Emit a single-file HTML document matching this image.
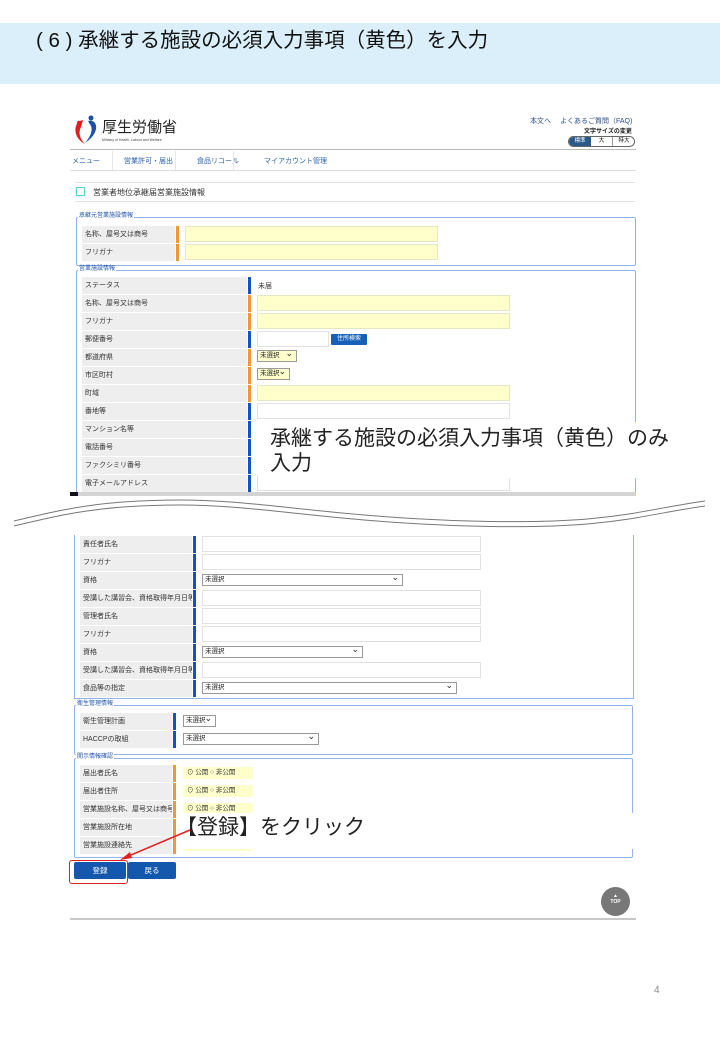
<!DOCTYPE html>
<html><head><meta charset="utf-8"><style>
*{margin:0;padding:0;box-sizing:border-box}
body{width:720px;height:1040px;position:relative;background:#fff;font-family:"Liberation Sans","Noto Sans CJK JP",sans-serif;overflow:hidden}
.a{position:absolute}
.lab{position:absolute;background:#eee;font-size:7px;color:#333;line-height:17px;padding-left:3px;height:17px;white-space:nowrap;overflow:hidden}
.bar{position:absolute;width:3px;height:17px}
.o{background:#f0973a}.b{background:#1452c4}
.in{position:absolute;height:16px;border:1px solid #e2e2e2;background:#fff}
.y{background:#ffffcc;border-color:#e6e6c0}
.fs{position:absolute;border:1px solid #8fb3ea;border-radius:2px}
.lg{position:absolute;font-size:6px;color:#2255aa;background:#fff;padding:0 1px;line-height:7px}
.sel{position:absolute;height:12px;border:1px solid #999;background:#fff;font-size:6.5px;line-height:10px;padding-left:2px;color:#222}
.sel:after{content:"⌄";position:absolute;right:3px;top:-3px;font-size:9px}
.rad{position:absolute;background:#ffffcc;height:12px;font-size:6.5px;line-height:12px;color:#333;padding-left:4px}
.nav{position:absolute;top:156px;font-size:7px;color:#2a62b0}
</style></head><body>
<div class="a" style="left:0;top:23px;width:720px;height:61px;background:#dbeffa"></div>
<div class="a" style="left:36px;top:28px;font-size:20.5px;color:#111;line-height:26px">( 6 ) 承継する施設の必須入力事項（黄色）を入力</div>

<!-- header -->
<svg class="a" style="left:73px;top:115px" width="28" height="30" viewBox="0 0 28 30"><path d="M10 5C4 6 1 12 3 19C5 25 10 28 12 29C7 24 5 18 8 12Z" fill="#e02020"/><circle cx="6" cy="8" r="2.2" fill="#e02020"/><path d="M15 6C22 4 25 11 22 17C20 22 16 25 12 28C17 22 20 16 18 11Z" fill="#1c4fa8"/><circle cx="18" cy="3" r="2.5" fill="#1c4fa8"/></svg>
<div class="a" style="left:102px;top:118px;font-size:15px;color:#222;font-family:'Noto Sans CJK JP',sans-serif;line-height:18px">厚生労働省</div>
<div class="a" style="left:102px;top:138px;font-size:3.5px;color:#444">Ministry of Health, Labour and Welfare</div>
<div class="a" style="left:530px;top:116px;font-size:7px;color:#2a4f8a">本文へ　 よくあるご質問（FAQ)</div>
<div class="a" style="left:584px;top:126px;font-size:6px;color:#222;font-weight:bold">文字サイズの変更</div>
<div class="a" style="left:568px;top:136px;width:67px;height:11px;border:1px solid #666;border-radius:6px;overflow:hidden;font-size:5.5px;line-height:9px;text-align:center"><span class="a" style="left:0;top:0;height:9px;width:22px;background:#2a5a8a;color:#fff">標準</span><span class="a" style="left:22px;top:0;height:9px;width:22px;border-right:1px solid #999">大</span><span class="a" style="left:44px;top:0;height:9px;width:22px">特大</span></div>
<div class="a" style="left:70px;top:149px;width:566px;height:1px;background:#bbb"></div>
<div class="nav" style="left:72px">メニュー</div>
<div class="nav" style="left:124px">営業許可・届出</div>
<div class="nav" style="left:197px">食品リコール</div>
<div class="nav" style="left:264px">マイアカウント管理</div>
<div class="a" style="left:112px;top:151px;width:1px;height:19px;background:#e6e6e6"></div>
<div class="a" style="left:175px;top:151px;width:1px;height:19px;background:#e6e6e6"></div>
<div class="a" style="left:233px;top:151px;width:1px;height:19px;background:#e6e6e6"></div>
<div class="a" style="left:70px;top:170px;width:566px;height:1px;background:#ddd"></div>
<div class="a" style="left:75px;top:182px;width:560px;height:1px;background:#e4e4e4"></div>
<div class="a" style="left:75px;top:201px;width:560px;height:1px;background:#e4e4e4"></div>
<div class="a" style="left:76px;top:187px;width:9px;height:9px;border:1px solid #6cc8d0"></div>
<div class="a" style="left:93px;top:187px;font-size:8px;color:#333">営業者地位承継届営業施設情報</div>

<!-- section 1 -->
<div class="fs" style="left:76px;top:217px;width:560px;height:49px"></div>
<div class="lg" style="left:78px;top:213px">承継元営業施設情報</div>
<div class="lab" style="left:82px;top:226px;width:93px">名称、屋号又は商号</div><div class="bar o" style="left:176px;top:226px"></div><div class="in y" style="left:185px;top:226px;width:253px"></div>
<div class="lab" style="left:82px;top:244px;width:93px">フリガナ</div><div class="bar o" style="left:176px;top:244px"></div><div class="in y" style="left:185px;top:244px;width:253px"></div>

<!-- section 2 -->
<div class="fs" style="left:76px;top:270px;width:560px;height:226px;border-bottom:none"></div>
<div class="lg" style="left:78px;top:266px">営業施設情報</div>
<div class="lab" style="left:82px;top:277px;width:165px">ステータス</div><div class="bar b" style="left:248px;top:277px"></div><div class="a" style="left:258px;top:281px;font-size:7px;color:#333">未届</div>
<div class="lab" style="left:82px;top:295px;width:165px">名称、屋号又は商号</div><div class="bar o" style="left:248px;top:295px"></div><div class="in y" style="left:257px;top:295px;width:253px"></div>
<div class="lab" style="left:82px;top:313px;width:165px">フリガナ</div><div class="bar o" style="left:248px;top:313px"></div><div class="in y" style="left:257px;top:313px;width:253px"></div>
<div class="lab" style="left:82px;top:331px;width:165px">郵便番号</div><div class="bar b" style="left:248px;top:331px"></div><div class="in" style="left:257px;top:331px;width:72px"></div><div class="a" style="left:331px;top:334px;width:36px;height:11px;background:#1660b8;color:#fff;font-size:6px;text-align:center;line-height:11px;border-radius:1px">住所検索</div>
<div class="lab" style="left:82px;top:349px;width:165px">都道府県</div><div class="bar o" style="left:248px;top:349px"></div><div class="sel" style="left:257px;top:350px;width:40px;background:#ffffcc">未選択</div>
<div class="lab" style="left:82px;top:367px;width:165px">市区町村</div><div class="bar o" style="left:248px;top:367px"></div><div class="sel" style="left:257px;top:368px;width:33px;background:#ffffcc">未選択</div>
<div class="lab" style="left:82px;top:385px;width:165px">町域</div><div class="bar o" style="left:248px;top:385px"></div><div class="in y" style="left:257px;top:385px;width:253px"></div>
<div class="lab" style="left:82px;top:403px;width:165px">番地等</div><div class="bar b" style="left:248px;top:403px"></div><div class="in" style="left:257px;top:403px;width:253px"></div>
<div class="lab" style="left:82px;top:421px;width:165px">マンション名等</div><div class="bar b" style="left:248px;top:421px"></div>
<div class="lab" style="left:82px;top:439px;width:165px">電話番号</div><div class="bar b" style="left:248px;top:439px"></div>
<div class="lab" style="left:82px;top:457px;width:165px">ファクシミリ番号</div><div class="bar b" style="left:248px;top:457px"></div>
<div class="lab" style="left:82px;top:475px;width:165px">電子メールアドレス</div><div class="bar b" style="left:248px;top:475px"></div><div class="in" style="left:257px;top:475px;width:253px"></div>
<div class="a" style="left:258px;top:422px;width:432px;height:56px;background:#fff"></div>
<div class="a" style="left:270px;top:426px;font-size:21px;line-height:25px;color:#222;white-space:nowrap">承継する施設の必須入力事項（黄色）のみ<br>入力</div>
<div class="a" style="left:70px;top:492px;width:566px;height:4px;background:#d4d4d4"></div>
<div class="a" style="left:70px;top:492px;width:8px;height:4px;background:#111"></div>

<!-- wave -->
<svg class="a" style="left:0;top:495px" width="720" height="40"><g fill="none" stroke="#777" stroke-width="1"><path d="M14 26C60 15 100 5 180 5S330 22 470 26S640 15 705 6"/><path d="M14 31C60 20 100 10 180 10S330 27 470 31S640 20 705 11"/></g></svg>

<!-- part 2 -->
<div class="a" style="left:74px;top:535px;width:1px;height:164px;background:#8fb3ea"></div>
<div class="a" style="left:633px;top:535px;width:1px;height:164px;background:#8fb3ea"></div>
<div class="a" style="left:74px;top:698px;width:560px;height:1px;background:#8fb3ea"></div>
<div class="lab" style="left:80px;top:536px;width:112px">責任者氏名</div><div class="bar b" style="left:193px;top:536px"></div><div class="in" style="left:202px;top:536px;width:279px"></div>
<div class="lab" style="left:80px;top:554px;width:112px">フリガナ</div><div class="bar b" style="left:193px;top:554px"></div><div class="in" style="left:202px;top:554px;width:279px"></div>
<div class="lab" style="left:80px;top:572px;width:112px">資格</div><div class="bar b" style="left:193px;top:572px"></div><div class="sel" style="left:202px;top:574px;width:201px">未選択</div>
<div class="lab" style="left:80px;top:590px;width:112px">受講した講習会、資格取得年月日等</div><div class="bar b" style="left:193px;top:590px"></div><div class="in" style="left:202px;top:590px;width:279px"></div>
<div class="lab" style="left:80px;top:608px;width:112px">管理者氏名</div><div class="bar b" style="left:193px;top:608px"></div><div class="in" style="left:202px;top:608px;width:279px"></div>
<div class="lab" style="left:80px;top:626px;width:112px">フリガナ</div><div class="bar b" style="left:193px;top:626px"></div><div class="in" style="left:202px;top:626px;width:279px"></div>
<div class="lab" style="left:80px;top:644px;width:112px">資格</div><div class="bar b" style="left:193px;top:644px"></div><div class="sel" style="left:202px;top:646px;width:161px">未選択</div>
<div class="lab" style="left:80px;top:662px;width:112px">受講した講習会、資格取得年月日等</div><div class="bar b" style="left:193px;top:662px"></div><div class="in" style="left:202px;top:662px;width:279px"></div>
<div class="lab" style="left:80px;top:680px;width:112px">食品等の指定</div><div class="bar b" style="left:193px;top:680px"></div><div class="sel" style="left:202px;top:682px;width:255px">未選択</div>

<div class="fs" style="left:74px;top:705px;width:559px;height:50px"></div>
<div class="lg" style="left:76px;top:701px">衛生管理情報</div>
<div class="lab" style="left:80px;top:713px;width:92px">衛生管理計画</div><div class="bar b" style="left:173px;top:713px"></div><div class="sel" style="left:183px;top:715px;width:33px">未選択</div>
<div class="lab" style="left:80px;top:731px;width:92px">HACCPの取組</div><div class="bar b" style="left:173px;top:731px"></div><div class="sel" style="left:183px;top:733px;width:136px">未選択</div>

<div class="fs" style="left:74px;top:758px;width:559px;height:100px"></div>
<div class="lg" style="left:76px;top:754px">開示情報確認</div>
<div class="lab" style="left:80px;top:765px;width:92px">届出者氏名</div><div class="bar o" style="left:173px;top:765px"></div><div class="rad" style="left:183px;top:767px;width:70px">⊙ 公開 ○ 非公開</div>
<div class="lab" style="left:80px;top:783px;width:92px">届出者住所</div><div class="bar o" style="left:173px;top:783px"></div><div class="rad" style="left:183px;top:785px;width:70px">⊙ 公開 ○ 非公開</div>
<div class="lab" style="left:80px;top:801px;width:92px">営業施設名称、屋号又は商号</div><div class="bar o" style="left:173px;top:801px"></div><div class="rad" style="left:183px;top:803px;width:70px">⊙ 公開 ○ 非公開</div>
<div class="lab" style="left:80px;top:819px;width:92px">営業施設所在地</div><div class="bar o" style="left:173px;top:819px"></div>
<div class="lab" style="left:80px;top:837px;width:92px">営業施設連絡先</div><div class="bar o" style="left:173px;top:837px"></div><div class="rad" style="left:183px;top:839px;width:70px"></div>
<div class="a" style="left:176px;top:813px;width:484px;height:36px;background:#fff"></div>
<div class="a" style="left:176px;top:814px;font-size:21px;line-height:27px;color:#222">【登録】をクリック</div>

<div class="a" style="left:74px;top:862px;width:52px;height:17px;background:#1458ad;color:#fff;font-size:7.5px;text-align:center;line-height:17px;border-radius:2px">登録</div>
<div class="a" style="left:128px;top:862px;width:48px;height:17px;background:#1458ad;color:#fff;font-size:7.5px;text-align:center;line-height:17px;border-radius:2px">戻る</div>
<div class="a" style="left:69px;top:860px;width:59px;height:24px;border:1px solid #e02020;border-radius:3px"></div>
<svg class="a" style="left:110px;top:825px" width="90" height="40"><line x1="80" y1="5" x2="14" y2="33" stroke="#e52020" stroke-width="1.5"/><path d="M10 35L20 27L22 33Z" fill="#e52020"/></svg>

<div class="a" style="left:601px;top:887px;width:29px;height:29px;border-radius:50%;background:#787878;color:#fff;text-align:center;font-size:5px;line-height:6px;padding-top:6px;font-weight:bold">▲<br>TOP</div>
<div class="a" style="left:70px;top:918px;width:566px;height:2px;background:#c8c8c8"></div>
<div class="a" style="left:654px;top:985px;font-size:10px;color:#888">4</div>
</body></html>
